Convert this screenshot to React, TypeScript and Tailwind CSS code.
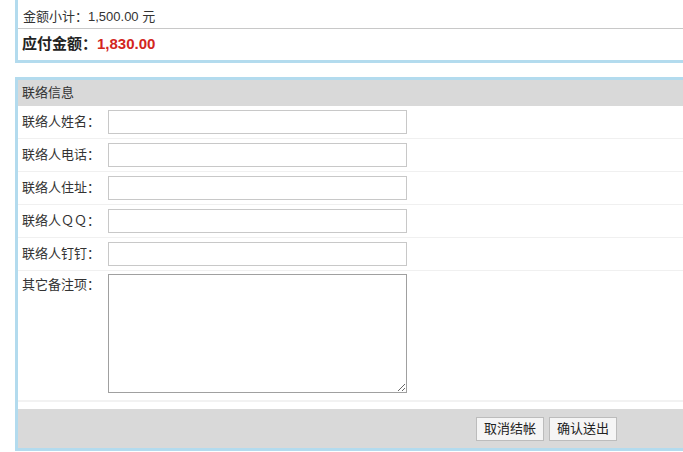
import React from 'react';

const fields = ['联络人姓名：', '联络人电话：', '联络人住址：', '联络人ＱＱ：', '联络人钉钉：'];

const App: React.FC = () => {
  return (
    <div className="w-[683px] h-[452px] overflow-hidden bg-white text-[13px] text-[#333] font-['Liberation_Sans','Noto_Sans_CJK_SC',sans-serif]">
      {/* order summary */}
      <div className="ml-[15px] border-l-[3px] border-b-[3px] border-[#b3dbee]">
        <div className="pl-[5px] pt-[8px] pb-[2px] leading-[18px] border-b border-[#c8c8c8]">
          金额小计：1,500.00 元
        </div>
        <div className="pl-[4px] pt-[5px] pb-[6px] leading-[20px] text-[15px] font-bold text-[#222]">
          应付金额：<span className="text-[#d3261d]">1,830.00</span>
        </div>
      </div>

      {/* contact info */}
      <div className="mt-[14px] ml-[15px] border-l-[3px] border-t-[3px] border-b-[3px] border-[#b3dbee]">
        <div className="h-[26px] bg-[#d9d9d9] pl-[4px] leading-[26px]">联络信息</div>

        {fields.map((label) => (
          <div key={label} className="flex border-b border-[#f0f0f0]">
            <div className="w-[90px] pl-[4px] leading-[32px]">{label}</div>
            <div className="pt-[4px] pb-[4px]">
              <input
                type="text"
                className="block w-[299px] h-[24px] border border-[#c8c8c8] bg-white px-[3px] outline-none"
              />
            </div>
          </div>
        ))}

        <div className="flex border-b-2 border-[#f2f2f2]">
          <div className="w-[90px] pl-[4px] pt-[4px] leading-[20px]">其它备注项：</div>
          <div className="pt-[3px] pb-[7px]">
            <textarea className="block w-[299px] h-[119px] border border-[#a0a0a0] bg-white outline-none" />
          </div>
        </div>

        <div className="mt-[7px] h-[39px] bg-[#d9d9d9] flex items-center justify-end gap-[5px] pr-[66px]">
          <button className="h-[24px] px-[7px] border border-[#bcbcbc] bg-[#f5f5f5] text-[13px] text-[#222] leading-[22px]">
            取消结帐
          </button>
          <button className="h-[24px] px-[7px] border border-[#bcbcbc] bg-[#f5f5f5] text-[13px] text-[#222] leading-[22px]">
            确认送出
          </button>
        </div>
      </div>
    </div>
  );
};

export default App;
